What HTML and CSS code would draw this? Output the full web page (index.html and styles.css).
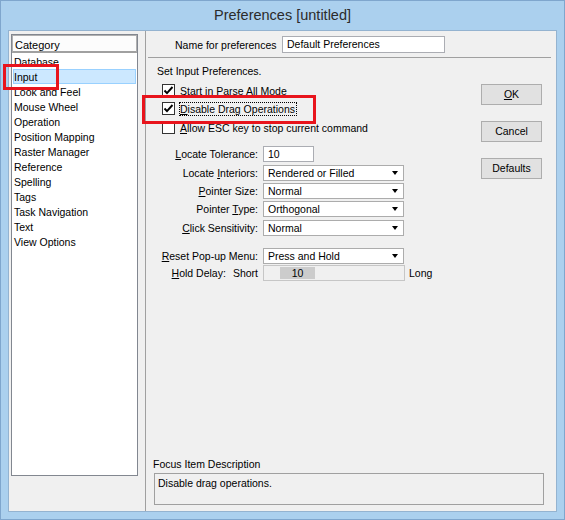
FILE: index.html
```html
<!DOCTYPE html>
<html>
<head>
<meta charset="utf-8">
<title>Preferences [untitled]</title>
<link rel="stylesheet" href="styles.css">
</head>
<body>
<div class="window">
  <div class="titlebar">Preferences [untitled]</div>
  <div class="client">
    <div class="left-pane">
      <div class="listbox">
        <div class="list-header">Category</div>
        <div class="item">Database</div>
        <div class="item selected">Input</div>
        <div class="item">Look and Feel</div>
        <div class="item">Mouse Wheel</div>
        <div class="item">Operation</div>
        <div class="item">Position Mapping</div>
        <div class="item">Raster Manager</div>
        <div class="item">Reference</div>
        <div class="item">Spelling</div>
        <div class="item">Tags</div>
        <div class="item">Task Navigation</div>
        <div class="item">Text</div>
        <div class="item">View Options</div>
      </div>
    </div>
    <div class="right-pane">
      <div class="name-row">
        <span class="name-label">Name for preferences</span>
        <div class="textbox name-input">Default Preferences</div>
      </div>
      <div class="separator"></div>
      <div class="body">
        <div class="main">
          <div class="section-title">Set Input Preferences.</div>
          <div class="checks">
            <div class="check-row">
              <span class="checkbox"><svg width="11" height="11" viewBox="0 0 11 11"><polyline points="1.5,5.5 4,8.2 9.5,2" fill="none" stroke="#000" stroke-width="1.9"/></svg></span>
              <span class="check-label">Start in Parse All Mode</span>
            </div>
            <div class="check-row">
              <span class="checkbox"><svg width="11" height="11" viewBox="0 0 11 11"><polyline points="1.5,5.5 4,8.2 9.5,2" fill="none" stroke="#000" stroke-width="1.9"/></svg></span>
              <span class="check-label focus"><u>D</u>isable Drag Operations</span>
            </div>
            <div class="check-row last">
              <span class="checkbox"></span>
              <span class="check-label"><u>A</u>llow ESC key to stop current command</span>
            </div>
          </div>
          <div class="form">
            <div class="form-row">
              <span class="label"><u>L</u>ocate Tolerance:</span>
              <div class="textbox tol-input">10</div>
            </div>
            <div class="form-row r2">
              <span class="label">Locate <u>I</u>nteriors:</span>
              <div class="combo">Rendered or Filled<span class="arrow"></span></div>
            </div>
            <div class="form-row r3">
              <span class="label"><u>P</u>ointer Size:</span>
              <div class="combo">Normal<span class="arrow"></span></div>
            </div>
            <div class="form-row r3">
              <span class="label">Pointer <u>T</u>ype:</span>
              <div class="combo">Orthogonal<span class="arrow"></span></div>
            </div>
            <div class="form-row r2">
              <span class="label"><u>C</u>lick Sensitivity:</span>
              <div class="combo">Normal<span class="arrow"></span></div>
            </div>
            <div class="form-row reset">
              <span class="label"><u>R</u>eset Pop-up Menu:</span>
              <div class="combo">Press and Hold<span class="arrow"></span></div>
            </div>
            <div class="form-row hold">
              <span class="label hold-label"><span><u>H</u>old Delay:</span><span>Short</span></span>
              <div class="slider"><div class="thumb">10</div></div>
              <span class="long">Long</span>
            </div>
          </div>
        </div>
        <div class="buttons">
          <div class="button"><u>O</u>K</div>
          <div class="button">Cancel</div>
          <div class="button">Defaults</div>
        </div>
      </div>
      <div class="footer">
        <div class="footer-label">Focus Item Description</div>
        <div class="desc-box">Disable drag operations.</div>
      </div>
    </div>
  </div>
  <div class="highlight hl-input"></div>
  <div class="highlight hl-drag"></div>
</div>
</body>
</html>
```
FILE: styles.css
```css
* { box-sizing: border-box; }
html, body { margin: 0; padding: 0; }
body {
  font-family: "Liberation Sans", Arial, sans-serif;
  font-size: 10.5px;
  color: #000;
  background: #abd0ee;
}
u { text-decoration: underline; text-underline-offset: 1px; }

.window {
  position: relative;
  width: 565px;
  height: 520px;
  background: #abd0ee;
  border: 1px solid #7fa6cd;
}
.titlebar {
  height: 29px;
  line-height: 28px;
  text-align: center;
  font-size: 14.5px;
  color: #2b2b2b;
}
.client {
  display: flex;
  margin: 0 7px;
  height: 482px;
  background: #f0f0f0;
  border: 1px solid #94b3d0;
}

.left-pane {
  width: 137px;
  flex: none;
  border-right: 1px solid #a0a0a0;
  padding: 3px 0 0 2px;
}
.listbox {
  width: 127px;
  height: 442px;
  background: #fff;
  border: 1px solid #828790;
}
.list-header {
  height: 18px;
  line-height: 16px;
  padding-top: 1px;
  border: 1px solid #b0b0b0;
  border-bottom: 2px solid #a0a0a0;
  padding-left: 2px;
  background: #fcfcfc;
  font-size: 11px;
}
.item {
  height: 15px;
  line-height: 14px;
  padding-top: 1px;
  margin: 0 1px;
  padding-left: 1px;
  white-space: nowrap;
}
.list-header + .item { margin-top: 1px; }
.item.selected {
  background: #cce8ff;
  box-shadow: inset 0 0 0 1px #99d1ff;
}

.right-pane {
  flex: 1;
  display: flex;
  flex-direction: column;
}
.name-row {
  display: flex;
  align-items: center;
  margin-top: 5px;
  padding-left: 29px;
}
.name-label { width: 107px; }
.textbox {
  background: #fff;
  border: 1px solid #abadb3;
  padding-left: 4px;
  line-height: 14px;
}
.name-input { width: 163px; height: 17px; }
.separator {
  height: 1px;
  background: #a0a0a0;
  margin: 4px 5px 0 2px;
}

.body { display: flex; }
.main { width: 335px; }
.section-title {
  margin-top: 6px;
  line-height: 15px;
  padding-left: 11px;
}
.checks { padding-left: 16px; }
.check-row {
  display: flex;
  align-items: center;
  height: 13px;
  margin-top: 5px;
}
.check-row.last { margin-top: 6px; }
.checkbox {
  width: 13px;
  height: 13px;
  flex: none;
  border: 1px solid #333;
  background: #fff;
  display: flex;
  align-items: center;
  justify-content: center;
}
.checkbox svg { display: block; }
.check-label { margin-left: 5px; white-space: nowrap; }
.check-label.focus {
  margin-left: 4px;
  border: 1px dotted #000;
  line-height: 12px;
  padding-right: 1px;
}

.form { margin-top: 12px; }
.form-row {
  display: flex;
  align-items: center;
  height: 16px;
}
.form-row.r2 { margin-top: 3px; }
.form-row.r3 { margin-top: 2px; }
.form-row.reset { margin-top: 12px; }
.form-row.hold { margin-top: 1px; }
.label {
  width: 112px;
  margin-right: 5px;
  text-align: right;
  white-space: nowrap;
}
.hold-label {
  display: flex;
  justify-content: flex-end;
  gap: 7px;
}
.tol-input { width: 51px; height: 16px; }
.combo {
  position: relative;
  width: 141px;
  height: 16px;
  line-height: 14px;
  background: #fff;
  border: 1px solid #acacac;
  padding-left: 4px;
}
.arrow {
  position: absolute;
  right: 5px;
  top: 5px;
  width: 0;
  height: 0;
  border-left: 3.5px solid transparent;
  border-right: 3.5px solid transparent;
  border-top: 4px solid #000;
}
.slider {
  width: 142px;
  height: 16px;
  border: 1px solid #c6c6c6;
  background: #f0f0f0;
  padding: 1px 0 1px 16px;
}
.thumb {
  width: 35px;
  height: 12px;
  line-height: 12px;
  background: #cccccc;
  text-align: center;
}
.long { margin-left: 4px; }

.buttons {
  margin-top: 26px;
  display: flex;
  flex-direction: column;
  gap: 16px;
}
.button {
  width: 61px;
  height: 21px;
  line-height: 19px;
  text-align: center;
  background: #e1e1e1;
  border: 1px solid #adadad;
}

.footer { margin-top: auto; }
.footer-label {
  padding-left: 7px;
  line-height: 15px;
}
.desc-box {
  margin: 1px 12px 6px 8px;
  height: 32px;
  border: 1px solid #a0a0a0;
  padding: 2px 3px;
  line-height: 15px;
}

.highlight {
  position: absolute;
  border: 3px solid #e8141c;
}
.hl-input { left: 2px; top: 63px; width: 56px; height: 26px; }
.hl-drag { left: 141px; top: 94px; width: 174px; height: 29px; }
```
